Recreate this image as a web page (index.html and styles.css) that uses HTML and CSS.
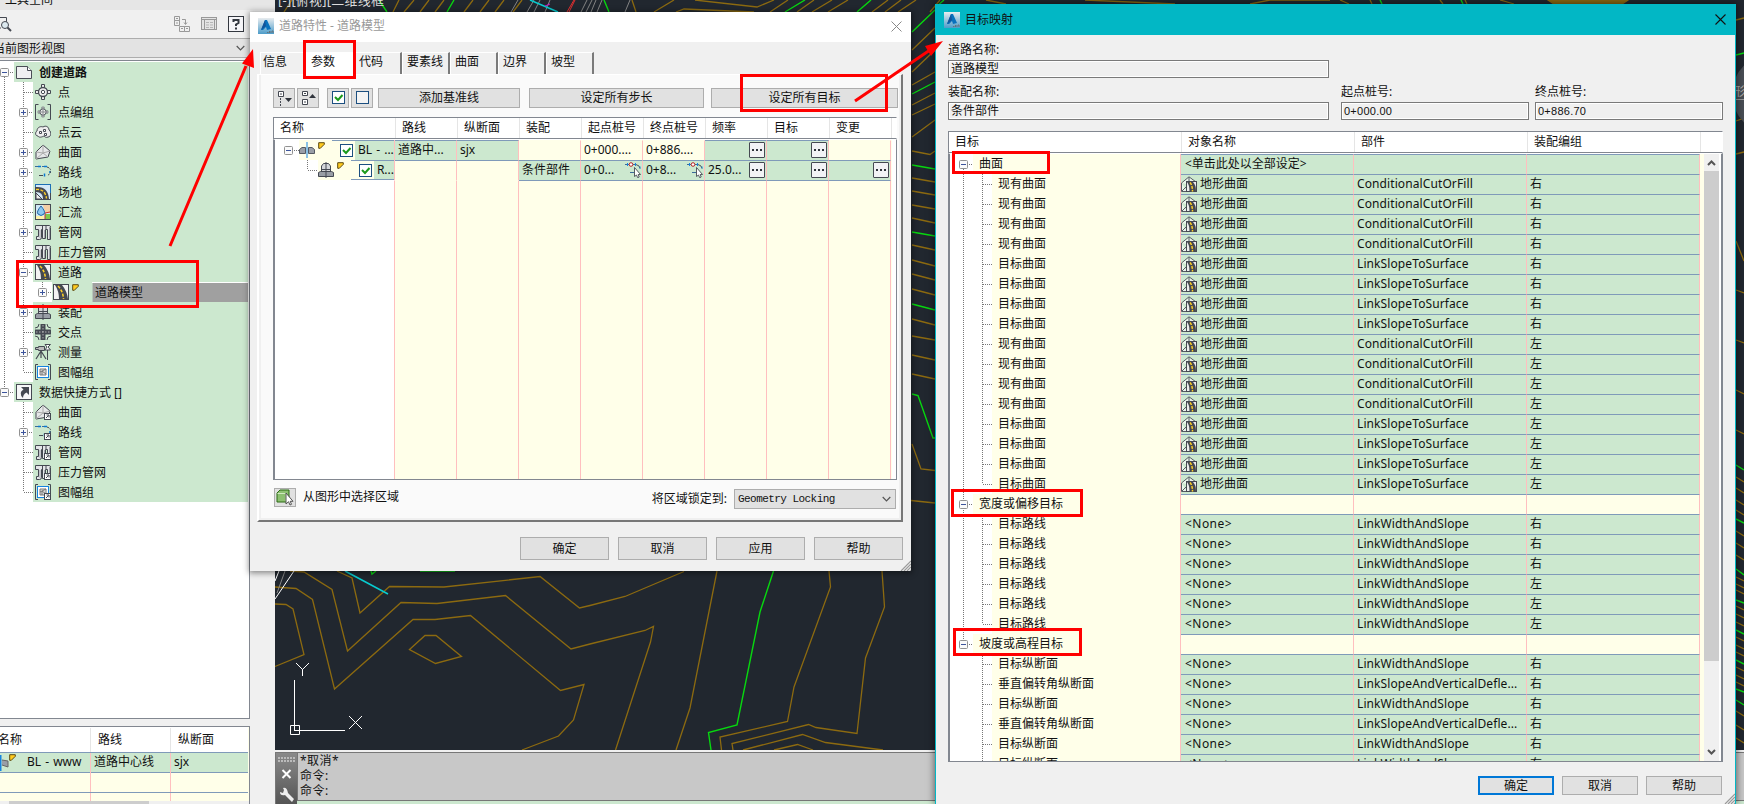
FILE: index.html
```html
<!DOCTYPE html>
<html lang="zh-CN">
<head>
<meta charset="utf-8">
<title>道路特性</title>
<link rel="stylesheet" href="styles.css">
</head>
<body>
<svg class="defs" width="0" height="0">
<defs>
<linearGradient id="sky" x1="0" y1="0" x2="0" y2="1"><stop offset="0" stop-color="#e8ecef"/><stop offset="1" stop-color="#4d9cc9"/></linearGradient>
<symbol id="plus" viewBox="0 0 9 9"><rect x=".5" y=".5" width="8" height="8" rx="1" fill="#fafafa" stroke="#919191"/><path d="M2 4.500h5M4.500 2v5" stroke="#3c549c"/></symbol>
<symbol id="minus" viewBox="0 0 9 9"><rect x=".5" y=".5" width="8" height="8" rx="1" fill="#fafafa" stroke="#919191"/><path d="M2 4.500h5" stroke="#3c549c"/></symbol>
<symbol id="g-root" viewBox="0 0 14 20"><path d="M10 10.500h4" stroke="#777" stroke-dasharray="1 1"/><path d="M4.500 15v5" stroke="#777" stroke-dasharray="1 1"/><use href="#minus" x="0" y="6" width="9" height="9"/></symbol>
<symbol id="g-root2" viewBox="0 0 14 20"><path d="M10 10.500h4" stroke="#777" stroke-dasharray="1 1"/><path d="M4.500 0v5" stroke="#777" stroke-dasharray="1 1"/><use href="#minus" x="0" y="6" width="9" height="9"/></symbol>
<symbol id="g-leaf" viewBox="0 0 29 20"><path d="M19.500 0v20M20 10.500h9" stroke="#777" stroke-dasharray="1 1"/></symbol>
<symbol id="g-last" viewBox="0 0 29 20"><path d="M19.500 0v10M20 10.500h9" stroke="#777" stroke-dasharray="1 1"/></symbol>
<symbol id="g-plus" viewBox="0 0 29 20"><path d="M19.500 0v20M25 10.500h4" stroke="#777" stroke-dasharray="1 1"/><use href="#plus" x="15" y="6" width="9" height="9"/></symbol>
<symbol id="g-minus" viewBox="0 0 29 20"><path d="M19.500 0v20M25 10.500h4" stroke="#777" stroke-dasharray="1 1"/><use href="#minus" x="15" y="6" width="9" height="9"/></symbol>
<symbol id="app" viewBox="0 0 16 16"><rect width="16" height="16" fill="url(#sky)"/><path d="M3 12 7 2h2l4 9-4 1-1-3-3 3z" fill="#0871bd"/><path d="M7 2 3 12l5-4z" fill="#14549a"/><path d="M9 14.500h1.500M11.500 13v2M13 13v2M14 13h1v2" stroke="#666" stroke-width=".8" fill="none"/></symbol>
<symbol id="flag" viewBox="0 0 7 7"><path d="M.7.7h5.600v1.600L2.300 6.300H.7z" fill="#ffcb1f" stroke="#5c4a12"/></symbol>
<symbol id="i-doc" viewBox="0 0 16 16"><path d="M.5 2.500h11l4 4v8H.5z" fill="#f0f0f2" stroke="#4a4e57"/><path d="M11.500 2.500v4h4" fill="#fff" stroke="#4a4e57"/></symbol>
<symbol id="i-point" viewBox="0 0 16 16"><path d="M6.500 4V.5h3V4M6.500 12v3.500h3V12M4 6.500H.5v3H4M12 6.500h3.500v3H12" fill="#eee" stroke="#454952"/><circle cx="8" cy="8" r="4.500" fill="#eee" stroke="#454952" stroke-width="1.300"/><circle cx="8" cy="8" r="1.700" fill="#fff" stroke="#454952"/></symbol>
<symbol id="i-pgroup" viewBox="0 0 16 16"><path d="M3.500.5h-3v15h3M12.500.5h3v15h-3" fill="none" stroke="#454952"/><use href="#i-point" x="2.500" y="2.500" width="11" height="11"/></symbol>
<symbol id="i-cloud" viewBox="0 0 16 16"><path d="M3 12C0 12 0 8 2 7c0-4 4-5 6-4 3-2 6 0 6 3 3 2 2 7-1 7-2 1-3 0-4-1-2 1-5 2-6 0z" fill="#eee" stroke="#454952"/><path d="M4.500 7.500h2v2h-2zM8.500 5.500h2v2h-2zM9.500 9.500h2v2h-2z" fill="#fff" stroke="#454952"/></symbol>
<symbol id="i-surf" viewBox="0 0 16 16"><path d="M8 1 15 7l-2 6-12 2V8z" fill="#e6e8e9" stroke="#454952"/><path d="M8 1v8l5 4M8 9l7-2M8 9l-7-1M8 9l-7 6" stroke="#aaa" fill="none"/></symbol>
<symbol id="i-align" viewBox="0 0 16 16"><path d="M0 2.500h3M7 2.500h2" stroke="#3c6a98"/><path d="M3 2.500h3M9 2.500h3M9.500 9.500v3M14 8h2" stroke="#0879d2" stroke-width="1.500"/><path d="M12 3c5 1 5 7 0 8.500" stroke="#454952" fill="none" stroke-dasharray="2 1"/><path d="M4 11.500h4" stroke="#454952"/></symbol>
<symbol id="i-road" viewBox="0 0 16 16"><rect x=".5" y=".5" width="15" height="15" fill="#f3f3f3" stroke="#454952"/><path d="M2 1h7q5 6 6 14H6Q6 7 2 1z" fill="#454952"/><path d="M5 2q5 5 5.500 13" stroke="#ffd028" stroke-width="1.600" stroke-dasharray="3 1.500" fill="none"/></symbol>
<symbol id="i-site" viewBox="0 0 16 16"><rect x=".5" y=".5" width="15" height="15" fill="#d5e9f8" stroke="#1d6fb5"/><path d="M1 3q12-1 13 12H8Q8 8 1 8z" fill="#454952"/><path d="M1 5.500q9-1 10.500 9" stroke="#ffd028" stroke-width="1.400" stroke-dasharray="3 1.500" fill="none"/><path d="M1 9l6 6H1z" fill="#eee" stroke="#454952"/><path d="M.5 3v12.500h15V9" fill="none" stroke="#454952"/></symbol>
<symbol id="i-catch" viewBox="0 0 16 16"><rect x=".5" y=".5" width="15" height="15" fill="#cfe8f5" stroke="#454952"/><path d="M8 1h7v8h-5z" fill="#f3cfa5"/><path d="M10 10h5v5h-5z" fill="#7fc94b"/><path d="M1 12h8v3H1z" fill="#fff3a8"/><path d="M10 15V9l5-1" stroke="#c33" fill="none"/><path d="M6 2q5 6 3 8-3 3-6 0-2-2 3-8z" fill="#8cc8f0" stroke="#2468a6"/></symbol>
<symbol id="i-pipe" viewBox="0 0 16 16"><path d="M.5 1.500h14q1 0 1 2v12h-3V5.500h-2v9h-3V5.500h-1v8q0 2-2 2h-3v-3h2v-7h-3z" fill="#e4e6e8" stroke="#454952"/><path d="M7.500 2v4M11 2v3" stroke="#454952"/><path d="M5 6v8M9.500 6v8M14.500 3v12" stroke="#a4a8ae"/></symbol>
<symbol id="i-asm" viewBox="0 0 16 16"><path d="M3.500 9.500V4l2-2.500h5l2 2.500v5.500z" fill="#d5d7da" stroke="#454952"/><path d="M.5 14.500v-4l2-1h11l2 1v4z" fill="#999ea6" stroke="#454952"/><path d="M8 0v16M3 7.500h10" stroke="#454952"/></symbol>
<symbol id="i-base" viewBox="0 0 16 16"><path d="M.5 11.500v-4L3 5.500h3.500V11.500zM15.500 11.500v-4L13 5.500H9.500V11.500z" fill="#999ea6" stroke="#555a63"/><path d="M8 0v16" stroke="#1583e0"/></symbol>
<symbol id="i-cross" viewBox="0 0 16 16"><path d="M8 0v16M0 8h16" stroke="#454952" stroke-width="5"/><path d="M8 1v14M1 8h14" stroke="#ccc" stroke-dasharray="1.500 1.500" stroke-width=".8"/><path d="M4 0q0 4-4 4M12 0q0 4 4 4M4 16q0-4-4-4M12 16q0-4 4-4" fill="none" stroke="#454952"/></symbol>
<symbol id="i-survey" viewBox="0 0 16 16"><path d="M.5 3.500h3v-1h6v4h-6v-1h-3z" fill="#bbb" stroke="#454952"/><path d="M6 7 1 15M6 7v7M6 7l5 8" stroke="#454952" stroke-width="1.200"/><path d="M10 .5h5.500L13 3l2.500 3H10l2-3zM12.500 6v10" fill="#fff" stroke="#454952"/></symbol>
<symbol id="i-frame" viewBox="0 0 16 16"><path d="M3 .5H.5v15H3M13 .5h2.500v15H13" fill="none" stroke="#454952"/><rect x="2.500" y="2.500" width="11" height="11" fill="#fff" stroke="#1583e0"/><path d="M5 5h6v6H5zM5 8l6-3M7 11V7l4 3" fill="#ddd" stroke="#777"/></symbol>
<symbol id="i-short" viewBox="0 0 16 16"><rect x=".5" y=".5" width="15" height="15" fill="#f7f7f8" stroke="#454952"/><path d="M5 3h8v8l-2.500-2.500Q7 10 7 14 2 9 7.500 5.500z" fill="#454952"/></symbol>
<symbol id="tag" viewBox="0 0 16 16"><rect x="9.500" y="9.500" width="6" height="6" fill="#fff" stroke="#454952"/><path d="M11 14l2.500-2.500M11.500 11H14v2.500" stroke="#454952" fill="none"/></symbol>
<symbol id="i-surfroad" viewBox="0 0 16 16"><path d="M.5 7 8 .8 15 6v4M.5 7v8.500H6M8 1v5M1 15l6-6" fill="#fff" stroke="#555a63" fill-opacity=".6"/><rect x="5.500" y="5.500" width="10" height="10" fill="#eee" stroke="#454952"/><path d="M6 6h6q3 3 3 9H8.500Q8.500 9 6 6z" fill="#454952"/><path d="M9 6.500q2.500 3 2.500 9" stroke="#ffd028" stroke-width="1.500" stroke-dasharray="3 1" fill="none"/></symbol>
<symbol id="i-dots" viewBox="0 0 16 16"><rect x=".5" y=".5" width="15" height="15" rx=".5" fill="#f2f2f5" stroke="#454952"/><path d="M3 8h2M7 8h2M11 8h2" stroke="#30343c" stroke-width="2"/></symbol>
<symbol id="i-pick" viewBox="0 0 16 16"><path d="M0 2.500h4M8 2.500h3M5 10.500h4" stroke="#3c6a98"/><path d="M11 2.500q4 1 4 4" stroke="#555" fill="none"/><path d="M2.500 1v3M10.500 1v3M15 4.500v2" stroke="#1583e0"/><circle cx="6" cy="2.500" r="1.800" fill="#fff" stroke="#b22"/><path d="M9.500 5.500v9l2-1.500 1.200 2.700 1.500-.7-1-2.500h2.300z" fill="#fff" stroke="#454952" stroke-width=".9"/></symbol>
<symbol id="i-check" viewBox="0 0 13 13"><rect x=".5" y=".5" width="12" height="12" fill="#fff" stroke="#1c4f80"/><path d="M3 6l3 3 4.500-5" fill="none" stroke="#1c9a1c" stroke-width="2"/></symbol>
<symbol id="i-box" viewBox="0 0 13 13"><rect x=".5" y=".5" width="12" height="12" fill="#f4f4f4" stroke="#1c4f80"/></symbol>
<symbol id="chev" viewBox="0 0 9 6"><path d="M.7 1l3.800 3.800L8.300 1" fill="none" stroke="#555" stroke-width="1.200"/></symbol>
<symbol id="grip" viewBox="0 0 11 11"><path d="M1 11 11 1M4 11l7-7M7 11l4-4M10 11l1-1" stroke="#9a9a9a" stroke-width="1.200"/></symbol>
<symbol id="t-leaf" viewBox="0 0 42 20"><path d="M13.500 0v20M32.500 0v20M33 10.500h9" stroke="#777" stroke-dasharray="1 1"/></symbol>
<symbol id="t-last" viewBox="0 0 42 20"><path d="M13.500 0v20M32.500 0v10M33 10.500h9" stroke="#777" stroke-dasharray="1 1"/></symbol>
<symbol id="t-tail" viewBox="0 0 42 20"><path d="M32.500 0v20M33 10.500h9" stroke="#777" stroke-dasharray="1 1"/></symbol>
<symbol id="t-root" viewBox="0 0 23 20"><path d="M13.500 15v5M19 10.500h4" stroke="#777" stroke-dasharray="1 1"/><use href="#minus" x="9" y="6" width="9" height="9"/></symbol>
<symbol id="t-root2" viewBox="0 0 23 20"><path d="M13.500 0v20M19 10.500h4" stroke="#777" stroke-dasharray="1 1"/><use href="#minus" x="9" y="6" width="9" height="9"/></symbol>
<symbol id="t-root3" viewBox="0 0 23 20"><path d="M13.500 0v5M19 10.500h4" stroke="#777" stroke-dasharray="1 1"/><use href="#minus" x="9" y="6" width="9" height="9"/></symbol>
</defs>
</svg>

<svg class="drawing" viewBox="0 0 1744 804" width="1744" height="804">
<rect x="275" width="1469" height="750" fill="#21272f"/>
<g fill="none" stroke="#8c6a10" stroke-width="1.300">
<path d="M337 571l15 7 8 35 29.500-26.500 54.500.5 96-10.500 39.500 31.500 10.500-2.500 35-9 59-25"/>
<path d="M290 571l14 1 28 17.500 15.500 61.500L401 602.500l36 1 68.500-8L571 649l19-5 55-13.500 8.500-4-3 15.500-35 108"/>
<path d="M275 587l21 1.500 16.500 11 22 89.500 78.500-69.500h22l35.500-4 90 75 23.500-6-10.500 35.500-15 16-36.500 14"/>
<path d="M275 604l11 .5 7 4.500 11 45.500-29 12M409.500 649.500l15.500-14h11l25.500 21-26 7z"/>
<path d="M717 571l-27 137-14 42M829 571l1.500 16L794 687l-6.500 34.500L720 737l1.500 13M882 571l2.500 36-19 51-8.500 75.500-41-6-7.500-3-76.500 19 1 6.500M743 750l59.500-15.500 23 8 57.500 7.500M774 750l23.500-5.500L813 750"/>
<path d="M912 50l23-22M912 72l23-22M912 85l23-13M912 105l23-12M912 115l23-11M912 137l23-17M912 151l18 3.500 5-3.500M912 178l23 4M912 191l23 4M912 205l23 4M912 218l23 5M912 245l23 5M912 260l23 6M912 274l23 6M912 289l23 6M912 319l23 6M912 336l23 4M912 355l23 5M912 374l23 5M912 444l9 25 14 1.500M911 500.500l24 2.500"/>
<path d="M284 12l8-12M393 12l6-12M404 12l10-12M420 12l9-12M435 12l9-12M464 12l9-12M480 12l9-12M495 12l9-12M513 12l9-12M636 12l-4-12M654 12l20-12M676 12l8-3 70 3M695 0l62 7 17-7M770 12l18-12M797 12l17-12M812 12l20-12M828 12l20-12M872 12l16-12M885 12l16-12M898 12l18-12M930 12l10-12M1006 4l-20-4M1085 0l90 4M1250 4l20-4h60M1340 0l9 4M1370 0l2 4M1440 0l3 4M1465 0l2 4M1500 0l14 4"/>
<path d="M1736 20l8-2M1736 89l8-2M1736 121l8-3M1736 154l8-2M1736 241l8 20M1736 290l8 3M1736 340l8 3M1736 390l8 4M1736 430l8 4M1736 477l8 5M1736 488l8 5M1736 500l8 5M1736 510l8 5M1736 531l8 5M1736 543l8 5M1736 555l8 5M1736 577l8 4M1736 584l8 4M1736 590l8 4M1736 606l8 4M1736 614l8 4M1736 622l8 4M1736 637l8 4M1736 645l8 4M1736 652l8 4M1736 667l8 4M1736 675l8 4M1736 682l8 4M1736 711l8 5M1736 725l8 5M1736 738l8 5"/>
<path d="M1548 0h80l-6 4h-68z" fill="#8c6a10"/>
</g>
<g fill="none" stroke="#07d80f" stroke-width="1.400">
<path d="M773.500 571 760 612l-23 113-28.500 7.500L711 750M371 571l1 3 4-3M420 571h35M912 32l23-22M912 94l23-12M912 165l23 4M912 232l23 4M912 304l23 6M912 394l6 1.500L933 438h2M387 12l-8-12M447 12l7-12M609 12l-5-12M785 12l20-12M857 12l14-12M935 8l9-8M1380 0l2 4M1461 0l2 4M1736 55l8-2M1736 465l8 5M1736 519l8 4M1736 569l8 6M1736 600l8 3M1736 630l8 4M1736 660l8 4M1736 689l8 3M1736 700l8 5"/>
</g>
<g fill="none" stroke="#fff"><path d="M294 571l-19 28M279 571l-4 10"/><path d="M285 571l-8 22M511 12l7-12M527 12l7-12M534 12l6-12M545 12l5-12M581 12l6-12M586 12l6-12M591 12l5-12M597 12l5-12M625 12l5-12" stroke="#858585"/></g>
<path d="M345 571l43 23M530 0l28 12" stroke="#08ccd0" stroke-width="1.500"/>
<path d="M567 12l7-12M569 12l6-12" stroke="#e03030"/><path d="M545 6l5-2" stroke="#d012d0"/>
<g stroke="#fff" fill="none"><path d="M294.500 680v50M294 730.500h51M290.500 725.500h9v9h-9zM349 716l13 13M362 716l-13 13M296 663l6.500 6.500L309 663M302.500 669v7"/></g>
<text x="278" y="5" fill="#ddd" font-size="13" textLength="106">[-][俯视][二维线框</text>
<circle cx="1772" cy="94" r="40" fill="#494e55"/><path d="M1736 99.500h8" stroke="#999"/><text x="1733" y="96" fill="#aaa" font-size="12">形</text>
</svg>

<aside class="toolspace">
<div class="ts-title">工具空间</div>
<div class="ts-tools">
<svg width="14" height="18" viewBox="0 0 14 18"><path d="M0 2.500h6.500V8M0 13h1" fill="none" stroke="#454952"/><circle cx="5" cy="10" r="3.500" fill="#dce9ef" stroke="#454952"/><path d="M7.500 12.500 11 16" stroke="#454952" stroke-width="2"/></svg>
<span class="grow"></span>
<svg width="16" height="16" viewBox="0 0 16 16"><path d="M.5.500h5v4h-5zM.5 4.500h5v5h-5zM5.500 10.500h5v5h-5zM10.500 10.500h5v5h-5zM2 2.500h2M2 7h2M7 12.500h2M12 12.500h2M8 3.500h3.500V8M10 6.500l1.500 2 1.500-2" fill="none" stroke="#999"/></svg>
<svg width="16" height="14" viewBox="0 0 16 14"><rect x=".5" y=".5" width="15" height="12" fill="#e4e4e4" stroke="#999"/><path d="M1 2.500h14M3.500 3v10M13.500 3v10" stroke="#999"/><path d="M5 5.500h3M9 5.500h3M5 8h3M9 8h3M5 10.500h3M9 10.500h3" stroke="#b5b5b5"/></svg>
<svg width="16" height="16" viewBox="0 0 16 16"><rect x=".5" y=".5" width="15" height="15" fill="#f5f5f8" stroke="#33373f"/><path d="M5.500 6V4h5v3L8 8.500v1.500M8 11.500v2" fill="none" stroke="#33373f" stroke-width="2"/></svg>
</div>
<div class="ts-combo"><span>当前图形视图</span><svg width="9" height="6"><use href="#chev"/></svg></div>
<div class="tree">
<div class="trow root"><svg class="g14"><use href="#g-root"/></svg><div class="fill"><svg class="ic"><use href="#i-doc"/></svg><b>创建道路</b></div></div>
<div class="branch">
<div class="trow"><svg class="g29"><use href="#g-leaf"/></svg><div class="fill"><svg class="ic"><use href="#i-point"/></svg><span>点</span></div></div>
<div class="trow"><svg class="g29"><use href="#g-plus"/></svg><div class="fill"><svg class="ic"><use href="#i-pgroup"/></svg><span>点编组</span></div></div>
<div class="trow"><svg class="g29"><use href="#g-leaf"/></svg><div class="fill"><svg class="ic"><use href="#i-cloud"/></svg><span>点云</span></div></div>
<div class="trow"><svg class="g29"><use href="#g-plus"/></svg><div class="fill"><svg class="ic"><use href="#i-surf"/></svg><span>曲面</span></div></div>
<div class="trow"><svg class="g29"><use href="#g-plus"/></svg><div class="fill"><svg class="ic"><use href="#i-align"/></svg><span>路线</span></div></div>
<div class="trow"><svg class="g29"><use href="#g-leaf"/></svg><div class="fill"><svg class="ic"><use href="#i-site"/></svg><span>场地</span></div></div>
<div class="trow"><svg class="g29"><use href="#g-leaf"/></svg><div class="fill"><svg class="ic"><use href="#i-catch"/></svg><span>汇流</span></div></div>
<div class="trow"><svg class="g29"><use href="#g-plus"/></svg><div class="fill"><svg class="ic"><use href="#i-pipe"/></svg><span>管网</span></div></div>
<div class="trow"><svg class="g29"><use href="#g-leaf"/></svg><div class="fill"><svg class="ic"><use href="#i-pipe"/></svg><span>压力管网</span></div></div>
<div class="trow"><svg class="g29"><use href="#g-minus"/></svg><div class="fill"><svg class="ic"><use href="#i-road"/></svg><span>道路</span></div></div>
<div class="trow"><svg class="g48" viewBox="0 0 48 20"><path d="M19.500 0v20M38.500 0v5M44 10.500h4" stroke="#777" stroke-dasharray="1 1"/><use href="#plus" x="34" y="6" width="9" height="9"/></svg><div class="model"><svg class="ic"><use href="#i-road"/></svg><svg class="fl"><use href="#flag"/></svg></div><div class="picked">道路模型</div></div>
<div class="trow"><svg class="g29"><use href="#g-plus"/></svg><div class="fill"><svg class="ic"><use href="#i-asm"/></svg><span>装配</span></div></div>
<div class="trow"><svg class="g29"><use href="#g-leaf"/></svg><div class="fill"><svg class="ic"><use href="#i-cross"/></svg><span>交点</span></div></div>
<div class="trow"><svg class="g29"><use href="#g-plus"/></svg><div class="fill"><svg class="ic"><use href="#i-survey"/></svg><span>测量</span></div></div>
<div class="trow"><svg class="g29"><use href="#g-last"/></svg><div class="fill"><svg class="ic"><use href="#i-frame"/></svg><span>图幅组</span></div></div>
</div>
<div class="trow root"><svg class="g14"><use href="#g-root2"/></svg><div class="fill"><svg class="ic"><use href="#i-short"/></svg><span>数据快捷方式 []</span></div></div>
<div class="branch end">
<div class="trow"><svg class="g29"><use href="#g-leaf"/></svg><div class="fill"><svg class="ic"><use href="#i-surf"/><use href="#tag"/></svg><span>曲面</span></div></div>
<div class="trow"><svg class="g29"><use href="#g-plus"/></svg><div class="fill"><svg class="ic"><use href="#i-align"/><use href="#tag"/></svg><span>路线</span></div></div>
<div class="trow"><svg class="g29"><use href="#g-leaf"/></svg><div class="fill"><svg class="ic"><use href="#i-pipe"/><use href="#tag"/></svg><span>管网</span></div></div>
<div class="trow"><svg class="g29"><use href="#g-leaf"/></svg><div class="fill"><svg class="ic"><use href="#i-pipe"/><use href="#tag"/></svg><span>压力管网</span></div></div>
<div class="trow"><svg class="g29"><use href="#g-last"/></svg><div class="fill"><svg class="ic"><use href="#i-frame"/><use href="#tag"/></svg><span>图幅组</span></div></div>
</div>
</div>
<div class="mini">
<div class="mini-row head"><span class="clipped">名称</span><span>路线</span><span>纵断面</span></div>
<div class="mini-row green"><span><svg width="27" height="20" viewBox="0 0 27 20"><path d="M.5 2v16" stroke="#1583e0" stroke-width="2"/><path d="M2 7l6 1v6l-6-2" fill="#999ea6" stroke="#666"/><use href="#flag" x="9" y="1" width="7" height="7"/></svg>BL - www</span><span>道路中心线</span><span>sjx</span></div>
<div class="mini-row"><span></span><span></span><span></span></div>
<div class="mini-row"><span></span><span></span><span></span></div>
<div class="mini-scroll"><i></i></div>
</div>
</aside>

<section class="command">
<div class="cmd-side"><svg width="22" height="52" viewBox="0 0 22 52"><path d="M2 5h18M2 8h18" stroke="#bbb" stroke-width="2" stroke-dasharray="2 1"/><path d="M6.500 17l8 8M14.500 17l-8 8" stroke="#fff" stroke-width="2"/><path d="M4 39l3 1 1-3-1-2q4-1 5 5l6 6-2 3-7-7q-5 1-5-3z" fill="#eee"/></svg></div>
<div class="cmd-main"><p>*取消*</p><p>命令:</p><p>命令:</p><div class="cmd-input"></div></div>
</section>

<section class="dialog props">
<header><svg class="ic"><use href="#app"/></svg><span>道路特性 - 道路模型</span><svg width="11" height="11" viewBox="0 0 11 11"><path d="M.5.500l10 10M10.500.500l-10 10" stroke="#888"/></svg></header>
<nav class="tabs"><span>信息</span><span class="on">参数</span><span>代码</span><span>要素线</span><span>曲面</span><span>边界</span><span>坡型</span></nav>
<div class="pane">
<div class="bar">
<button class="sq"><svg width="16" height="16" viewBox="0 0 16 16"><path d="M2.500 1.500h5v5h-5z" fill="#fff" stroke="#454952"/><path d="M4 4h2M4.500 8v8" stroke="#454952" stroke-dasharray="2 1"/><path d="M9 8h7l-3.500 4z" fill="#30343c"/></svg></button>
<button class="sq"><svg width="16" height="16" viewBox="0 0 16 16"><path d="M2.500 1.500h5v4h-5zM2.500 9.500h5v5h-5z" fill="#fff" stroke="#454952"/><path d="M4 3.500h2M4 12h2" stroke="#454952"/><path d="M9 8h7l-3.500-4z" fill="#30343c"/></svg></button>
<button class="sq gap8"><svg width="13" height="13"><use href="#i-check"/></svg></button>
<button class="sq"><svg width="13" height="13"><use href="#i-box"/></svg></button>
<button class="b1">添加基准线</button><button class="b2">设定所有步长</button><button class="b3">设定所有目标</button>
</div>
<div class="grid">
<div class="ghead"><span>名称</span><span>路线</span><span>纵断面</span><span>装配</span><span>起点桩号</span><span>终点桩号</span><span>频率</span><span>目标</span><span>变更</span></div>
<div class="gbody">
<div class="grow1">
<div class="c name"><svg class="n1" viewBox="0 0 24 20"><path d="M19 10.500h5" stroke="#777" stroke-dasharray="1 1"/><use href="#minus" x="9" y="6" width="9" height="9"/></svg><div class="nicon"><svg class="ic"><use href="#i-base"/></svg><svg class="fl"><use href="#flag"/></svg></div><div class="ck line"><svg width="13" height="13"><use href="#i-check"/></svg></div><div class="nt line">BL - ...</div></div>
<div class="c g t">道路中...</div><div class="c g t">sjx</div><div class="c"></div><div class="c">0+000....</div><div class="c">0+886....</div><div class="c g t"><svg class="ic end-ic"><use href="#i-dots"/></svg></div><div class="c g t"><svg class="ic end-ic"><use href="#i-dots"/></svg></div><div class="c"></div>
</div>
<div class="grow1 second">
<div class="c name"><svg class="n2" viewBox="0 0 43 20"><path d="M32.500 0v10M33 10.500h10" stroke="#777" stroke-dasharray="1 1"/></svg><div class="nicon"><svg class="ic"><use href="#i-asm"/></svg><svg class="fl"><use href="#flag"/></svg></div><div class="ck line"><svg width="13" height="13"><use href="#i-check"/></svg></div><div class="nt line">R...</div></div>
<div class="c t"></div><div class="c t"></div><div class="c g t">条件部件</div><div class="c g t">0+0...<svg class="ic end-ic"><use href="#i-pick"/></svg></div><div class="c g t">0+8...<svg class="ic end-ic"><use href="#i-pick"/></svg></div><div class="c g t">25.0...<svg class="ic end-ic"><use href="#i-dots"/></svg></div><div class="c g t"><svg class="ic end-ic"><use href="#i-dots"/></svg></div><div class="c g t"><svg class="ic end-ic"><use href="#i-dots"/></svg></div>
</div>
<div class="grow1 rest"><div class="c blank"></div><div class="c"></div><div class="c"></div><div class="c t"></div><div class="c t"></div><div class="c t"></div><div class="c t"></div><div class="c t"></div><div class="c t"></div></div>
</div>
</div>
<div class="pfoot">
<button class="sq"><svg width="18" height="17" viewBox="0 0 18 17"><path d="M1 4l3-3h9v9l-3 3H1z" fill="#8dc071" stroke="#2b6a14"/><path d="M1.500 4.500h8.500v8" fill="none" stroke="#d0e9c0"/><path d="M10 4v11l2.500-2.300L14 16l1.500-.7-1.300-3H17z" fill="#fff" stroke="#444" stroke-width=".9"/></svg></button>
<span class="st">从图形中选择区域</span><span class="grow"></span><span class="st lock">将区域锁定到:</span>
<div class="combo"><span>Geometry Locking</span><svg width="9" height="6"><use href="#chev"/></svg></div>
</div>
</div>
<footer><button>确定</button><button>取消</button><button>应用</button><button>帮助</button></footer>
<svg class="corner" width="11" height="11"><use href="#grip"/></svg>
</section>

<section class="dialog target">
<header><svg class="ic"><use href="#app"/></svg><span>目标映射</span><svg width="11" height="11" viewBox="0 0 11 11"><path d="M.5.500l10 10M10.500.500l-10 10" stroke="#111" stroke-width="1.100"/></svg></header>
<div class="form">
<label class="w1">道路名称:<span class="in">道路模型</span></label>
<div class="frow"><label class="w1">装配名称:<span class="in">条件部件</span></label><label class="w2">起点桩号:<span class="in num">0+000.00</span></label><label class="w3">终点桩号:<span class="in num">0+886.70</span></label></div>
</div>
<div class="map">
<div class="mhead"><span>目标</span><span>对象名称</span><span>部件</span><span>装配编组</span><span></span></div>
<div class="mbody">
<div class="rows">
<div class="r top"><div class="k"><svg class="k1"><use href="#t-root"/></svg><span>曲面</span></div><div>&lt;单击此处以全部设定&gt;</div><div></div><div></div></div>
<div class="r"><div class="k"><svg class="k2"><use href="#t-leaf"/></svg><span>现有曲面</span></div><div class="s"><svg class="ic"><use href="#i-surfroad"/></svg>地形曲面</div><div>ConditionalCutOrFill</div><div>右</div></div>
<div class="r"><div class="k"><svg class="k2"><use href="#t-leaf"/></svg><span>现有曲面</span></div><div class="s"><svg class="ic"><use href="#i-surfroad"/></svg>地形曲面</div><div>ConditionalCutOrFill</div><div>右</div></div>
<div class="r"><div class="k"><svg class="k2"><use href="#t-leaf"/></svg><span>现有曲面</span></div><div class="s"><svg class="ic"><use href="#i-surfroad"/></svg>地形曲面</div><div>ConditionalCutOrFill</div><div>右</div></div>
<div class="r"><div class="k"><svg class="k2"><use href="#t-leaf"/></svg><span>现有曲面</span></div><div class="s"><svg class="ic"><use href="#i-surfroad"/></svg>地形曲面</div><div>ConditionalCutOrFill</div><div>右</div></div>
<div class="r"><div class="k"><svg class="k2"><use href="#t-leaf"/></svg><span>目标曲面</span></div><div class="s"><svg class="ic"><use href="#i-surfroad"/></svg>地形曲面</div><div>LinkSlopeToSurface</div><div>右</div></div>
<div class="r"><div class="k"><svg class="k2"><use href="#t-leaf"/></svg><span>目标曲面</span></div><div class="s"><svg class="ic"><use href="#i-surfroad"/></svg>地形曲面</div><div>LinkSlopeToSurface</div><div>右</div></div>
<div class="r"><div class="k"><svg class="k2"><use href="#t-leaf"/></svg><span>目标曲面</span></div><div class="s"><svg class="ic"><use href="#i-surfroad"/></svg>地形曲面</div><div>LinkSlopeToSurface</div><div>右</div></div>
<div class="r"><div class="k"><svg class="k2"><use href="#t-leaf"/></svg><span>目标曲面</span></div><div class="s"><svg class="ic"><use href="#i-surfroad"/></svg>地形曲面</div><div>LinkSlopeToSurface</div><div>右</div></div>
<div class="r"><div class="k"><svg class="k2"><use href="#t-leaf"/></svg><span>现有曲面</span></div><div class="s"><svg class="ic"><use href="#i-surfroad"/></svg>地形曲面</div><div>ConditionalCutOrFill</div><div>左</div></div>
<div class="r"><div class="k"><svg class="k2"><use href="#t-leaf"/></svg><span>现有曲面</span></div><div class="s"><svg class="ic"><use href="#i-surfroad"/></svg>地形曲面</div><div>ConditionalCutOrFill</div><div>左</div></div>
<div class="r"><div class="k"><svg class="k2"><use href="#t-leaf"/></svg><span>现有曲面</span></div><div class="s"><svg class="ic"><use href="#i-surfroad"/></svg>地形曲面</div><div>ConditionalCutOrFill</div><div>左</div></div>
<div class="r"><div class="k"><svg class="k2"><use href="#t-leaf"/></svg><span>现有曲面</span></div><div class="s"><svg class="ic"><use href="#i-surfroad"/></svg>地形曲面</div><div>ConditionalCutOrFill</div><div>左</div></div>
<div class="r"><div class="k"><svg class="k2"><use href="#t-leaf"/></svg><span>目标曲面</span></div><div class="s"><svg class="ic"><use href="#i-surfroad"/></svg>地形曲面</div><div>LinkSlopeToSurface</div><div>左</div></div>
<div class="r"><div class="k"><svg class="k2"><use href="#t-leaf"/></svg><span>目标曲面</span></div><div class="s"><svg class="ic"><use href="#i-surfroad"/></svg>地形曲面</div><div>LinkSlopeToSurface</div><div>左</div></div>
<div class="r"><div class="k"><svg class="k2"><use href="#t-leaf"/></svg><span>目标曲面</span></div><div class="s"><svg class="ic"><use href="#i-surfroad"/></svg>地形曲面</div><div>LinkSlopeToSurface</div><div>左</div></div>
<div class="r"><div class="k"><svg class="k2"><use href="#t-last"/></svg><span>目标曲面</span></div><div class="s"><svg class="ic"><use href="#i-surfroad"/></svg>地形曲面</div><div>LinkSlopeToSurface</div><div>左</div></div>
<div class="r cat"><div class="k"><svg class="k1"><use href="#t-root2"/></svg><span>宽度或偏移目标</span></div><div></div><div></div><div></div></div>
<div class="r"><div class="k"><svg class="k2"><use href="#t-leaf"/></svg><span>目标路线</span></div><div>&lt;None&gt;</div><div>LinkWidthAndSlope</div><div>右</div></div>
<div class="r"><div class="k"><svg class="k2"><use href="#t-leaf"/></svg><span>目标路线</span></div><div>&lt;None&gt;</div><div>LinkWidthAndSlope</div><div>右</div></div>
<div class="r"><div class="k"><svg class="k2"><use href="#t-leaf"/></svg><span>目标路线</span></div><div>&lt;None&gt;</div><div>LinkWidthAndSlope</div><div>右</div></div>
<div class="r"><div class="k"><svg class="k2"><use href="#t-leaf"/></svg><span>目标路线</span></div><div>&lt;None&gt;</div><div>LinkWidthAndSlope</div><div>左</div></div>
<div class="r"><div class="k"><svg class="k2"><use href="#t-leaf"/></svg><span>目标路线</span></div><div>&lt;None&gt;</div><div>LinkWidthAndSlope</div><div>左</div></div>
<div class="r"><div class="k"><svg class="k2"><use href="#t-last"/></svg><span>目标路线</span></div><div>&lt;None&gt;</div><div>LinkWidthAndSlope</div><div>左</div></div>
<div class="r cat"><div class="k"><svg class="k1"><use href="#t-root3"/></svg><span>坡度或高程目标</span></div><div></div><div></div><div></div></div>
<div class="r"><div class="k"><svg class="k2"><use href="#t-tail"/></svg><span>目标纵断面</span></div><div>&lt;None&gt;</div><div>LinkWidthAndSlope</div><div>右</div></div>
<div class="r"><div class="k"><svg class="k2"><use href="#t-tail"/></svg><span>垂直偏转角纵断面</span></div><div>&lt;None&gt;</div><div>LinkSlopeAndVerticalDefle...</div><div>右</div></div>
<div class="r"><div class="k"><svg class="k2"><use href="#t-tail"/></svg><span>目标纵断面</span></div><div>&lt;None&gt;</div><div>LinkWidthAndSlope</div><div>右</div></div>
<div class="r"><div class="k"><svg class="k2"><use href="#t-tail"/></svg><span>垂直偏转角纵断面</span></div><div>&lt;None&gt;</div><div>LinkSlopeAndVerticalDefle...</div><div>右</div></div>
<div class="r"><div class="k"><svg class="k2"><use href="#t-tail"/></svg><span>目标纵断面</span></div><div>&lt;None&gt;</div><div>LinkWidthAndSlope</div><div>右</div></div>
<div class="r"><div class="k"><svg class="k2"><use href="#t-tail"/></svg><span>目标纵断面</span></div><div>&lt;None&gt;</div><div>LinkWidthAndSlope</div><div>右</div></div>
</div>
<div class="sb"><svg width="15" height="17" viewBox="0 0 15 17"><path d="M4 11l3.500-3.500L11 11" fill="none" stroke="#555" stroke-width="2"/></svg><i></i><svg width="15" height="17" viewBox="0 0 15 17"><path d="M4 6l3.500 3.500L11 6" fill="none" stroke="#555" stroke-width="2"/></svg></div>
</div>
</div>
<footer><button class="def">确定</button><button>取消</button><button>帮助</button></footer>
<svg class="corner" width="11" height="11"><use href="#grip"/></svg>
</section>

<svg class="marks" viewBox="0 0 1744 804" width="1744" height="804">
<g fill="none" stroke="#f00" stroke-width="3"><path d="M17.500 261.500h180v45h-180zM304.500 41.500h50v36h-50zM741.500 75.500h145v35h-145zM953.500 152.500h95v20h-95zM952.500 490.500h129v25h-129zM954.500 629.500h126v25h-126z"/><path d="M170 246 246 66M855 101l75-51"/></g>
<path d="M253 49l1 19-12-4.500zM943 41l-12 15-6-10z" fill="#f00"/>
</svg>
</body>
</html>
```
FILE: styles.css
```css
* { box-sizing: border-box; }
body {
  margin: 0; width: 1744px; height: 804px; overflow: hidden; position: relative;
  background: #f0f0f0; color: #111; font: 12px/20px "Noto Sans", "Noto Sans CJK SC", sans-serif;
}
svg { flex: none; display: block; }
.defs, .drawing, .marks { position: absolute; left: 0; top: 0; }
.marks { pointer-events: none; }
.ic { width: 16px; height: 16px; }
.fl { width: 7px; height: 7px; }
.grow { flex: 1; }
button { font: inherit; color: #111; margin: 0; padding: 0; background: #e1e1e1; border: 1px solid #adadad; display: flex; flex: none; align-items: center; justify-content: center; }

/* tool space */
.toolspace { position: absolute; left: 0; top: 0; width: 275px; height: 804px; padding-right: 25px; display: flex; flex-direction: column; background: #f0f0f0; }
.ts-title { height: 10px; padding-left: 5px; line-height: 20px; margin-right: -25px; background: #e6e6e6; display: flex; align-items: flex-end; }
.ts-tools { height: 28px; display: flex; align-items: center; gap: 11px; padding-right: 6px; }
.ts-combo { height: 20px; display: flex; align-items: center; justify-content: space-between; padding-right: 5px; background: #e3e3e3; border-top: 1px solid #adadad; border-bottom: 1px solid #adadad; }
.ts-combo span { margin-left: -7px; padding-top: 1px; }
.tree { margin-top: 2px; height: 659px; border: 1px solid #828790; border-left: 0; padding-top: 1px; background: #fff; }
.trow { display: flex; height: 20px; }
.trow .fill { flex: 1; display: flex; align-items: center; background: #cce8cf; padding-left: 2px; gap: 7px; margin-right: 1px; }
.fill span, .fill b { padding-top: 1px; line-height: 19px; }
.branch { padding-left: 4px; background: repeating-linear-gradient(#fff 0 1px, #777 1px 2px) 4px 0 / 1px 100% no-repeat; }
.branch.end { background: none; }
.g14 { width: 14px; height: 20px; }
.g29 { width: 29px; height: 20px; }
.g48 { width: 48px; height: 20px; }
.model { display: flex; width: 40px; padding: 2px 0 0 1px; gap: 3px; background: #cce8cf; }
.picked { flex: 1; background: #a0a0a0; border-left: 1px solid #b8c8ba; margin: 1px 1px 0 0; padding-left: 2px; line-height: 19px; }
.mini { margin-top: 7px; height: 78px; background: #ffffe9; border-top: 1px solid #828790; border-right: 1px solid #828790; display: flex; flex-direction: column; overflow: hidden; }
.mini-row { display: grid; grid-template-columns: 91px 80px 77px; height: 20px; flex: none; border-bottom: 1px solid #7f9ab9; margin-right: 1px; }
.mini-row span { border-right: 1px solid #ffbfbf; padding-left: 3px; display: flex; line-height: 17px; word-spacing: 1px; }
.mini-row span:first-child { padding-left: 0; }
.mini-row span:last-child { border: 0; }
.mini-row.head { height: 26px; background: #fff; padding-top: 1px; }
.mini-row.head span { border-color: #e5e5e5; padding-left: 7px; line-height: 24px; }
.mini-row.head .clipped { margin-left: -9px; }
.mini-row.green { background: #cce8cf; }
.mini-row:nth-child(4) { height: 8px; border: 0; }
.mini-scroll { height: 4px; background: #f0f0f0; }
.mini-scroll i { display: block; width: 140px; height: 4px; margin-left: 9px; background: #cdcdcd; }

/* command line */
.command { position: absolute; left: 275px; top: 750px; width: 1469px; height: 54px; display: flex; padding-top: 2px; background: #f0f0f0; }
.cmd-side { width: 23px; border: 1px solid #777; border-bottom: 0; background: linear-gradient(#8a8a8a, #555); overflow: hidden; }
.cmd-main { flex: 1; background: #c8c8c8; border-top: 1px solid #777; padding-left: 2px; }
.cmd-main p { margin: 0; height: 15px; line-height: 15px; letter-spacing: .5px; }
.cmd-input { height: 10px; margin: 2px 0 0 -3px; border-top: 1px solid #777; background: #cce8cf; }

/* dialogs */
.dialog { position: absolute; display: flex; flex-direction: column; background: #f0f0f0; }
.dialog header { display: flex; align-items: center; gap: 5px; }
.dialog header span { flex: 1; }
.corner { position: absolute; right: 0; bottom: 0; }
.props { left: 250px; top: 12px; width: 661px; height: 559px; box-shadow: 0 1px 6px 1px rgba(0, 0, 0, .45); }
.props header { height: 30px; padding: 0 9px 2px 8px; background: #fff; color: #999; }
.tabs { display: flex; height: 22px; margin: 10px 0 0 10px; }
.tabs span { width: 48px; padding-left: 5px; border-left: 1px solid #fff; border-right: 2px solid #7a7a7a; border-top: 1px solid #fff; line-height: 18px; }
.tabs span:nth-child(1) { width: 46px; padding-left: 2px; border-right: 0; }
.tabs span:nth-child(2) { padding-left: 4px; }
.tabs span:nth-child(3) { padding-left: 4px; }
.tabs span:nth-child(n+4) { padding-left: 4px; }
.tabs .on { background: #fff; border-color: #fff; }
.pane { width: 646px; height: 448px; margin-left: 7px; border: 1px solid #fff; border-left-width: 2px; border-right: 2px solid #777; border-bottom: 2px solid #777; padding: 0 2px 2px; background: #f0f0f0; display: flex; flex-direction: column; }
.pane > div { background: #fafafa; }
.bar { display: flex; padding: 13px 0 10px 12px; gap: 2px; height: 42px; }
.bar button { height: 20px; padding-bottom: 1px; }
.sq { width: 22px; height: 20px; }
.bar .gap8 { margin-left: 6px; }
.b1 { width: 142px; margin-left: 3px; }
.b2 { width: 175px; margin-left: 7px; }
.b3 { width: 187px; margin-left: 5px; }
.grid { width: 638px; height: 363px; padding: 0 2px 0 12px; display: flex; flex-direction: column; }
.ghead { display: grid; grid-template-columns: 122px repeat(8, 62px) 1fr; height: 22px; border: 1px solid #828790; border-right-color: #fff; background: #fff; }
.ghead span { padding-left: 6px; border-right: 1px solid #e5e5e5; }
.gbody { flex: 1; border: 2px solid #828790; border-top: 1px solid #fff; border-right-width: 1px; border-bottom-width: 1px; background: #fff; display: flex; flex-direction: column; }
.grow1 { display: grid; grid-template-columns: 120px repeat(8, 62px); height: 20px; margin-right: 4px; background: #ffffe9; }
.c { border-right: 1px solid #ffbfbf; padding-left: 3px; line-height: 17px; display: flex; white-space: nowrap; overflow: hidden; border-top: 1px solid transparent; }
.c.g { background: #cce8cf; }
.grow1 .c.g.t, .rest .c.t { border-top-color: #7f9ab9; }
.second .c:nth-child(2), .second .c:nth-child(3) { border-top-color: #7f9ab9; }
.end-ic { margin: 1px 1px 0 auto; }
.rest { flex: 1; }
.c.blank { background: #fff; }
.c.name { padding: 0; background: #fff; border-top: 0; }
.n1 { width: 24px; height: 20px; }
.n2 { width: 43px; height: 20px; }
.nicon { display: flex; width: 33px; gap: 3px; padding: 2px 0 0; background: #ffffe9; }
.ck { background: #ffffe9; padding: 3px 2px 0 8px; width: 23px; }
.nt { flex: 1; background: #cce8cf; padding-left: 3px; word-spacing: 1px; }
.line { border-top: 1px solid #7f9ab9; }
.second .line { border-bottom: 1px solid #7f9ab9; height: 20px; }
.pfoot { flex: 1; display: flex; align-items: flex-start; padding: 8px 3px 0 13px; }
.pfoot .sq { height: 19px; }
.st { padding-left: 7px; line-height: 18px; }
.lock { line-height: 21px; padding-right: 7px; }
.combo { width: 162px; height: 20px; margin-top: 1px; padding: 0 4px 0 3px; display: flex; align-items: center; justify-content: space-between; border: 1px solid #adadad; background: #e1e1e1; font: 11px "Liberation Mono", monospace; letter-spacing: -.55px; }
.props footer { display: flex; gap: 9px; margin: 15px 8px 0 auto; }
.props footer button { width: 89px; height: 23px; }

.target { left: 935px; top: 4px; width: 801px; height: 800px; border: 1px solid #02b7c5; border-bottom: 0; box-shadow: 0 0 7px 1px rgba(0, 0, 0, .5); }
.target header { height: 30px; padding: 0 9px 1px 8px; background: #02b7c5; }
.form { padding: 5px 0 0 12px; }
.form label { display: block; }
.w1 { width: 381px; }
.w2, .w3 { width: 188px; }
.in { display: block; height: 18px; border: 1px solid #7a7a7a; padding-left: 2px; line-height: 15px; box-shadow: inset 0 0 0 1px #fff; }
.form > label { height: 42px; }
.frow { display: flex; height: 42px; }
.w2 { margin-left: 12px; }
.w3 { margin-left: 6px; }
.num { font-family: "Liberation Sans", sans-serif; font-size: 11px; letter-spacing: .25px; line-height: 16px; }
.map { width: 775px; height: 631px; margin: 7px 0 0 12px; display: flex; flex-direction: column; }
.mhead { display: grid; grid-template-columns: 233px 173px 173px 173px 1fr; height: 22px; background: #fff; border: 1px solid #828790; border-right-color: #fff; }
.mhead span { padding-left: 6px; border-right: 1px solid #e5e5e5; }
.mhead span:last-child { border: 0; }
.mbody { height: 609px; display: flex; justify-content: space-between; background: #fff; border: 2px solid #828790; border-top: 1px solid #fff; border-bottom-width: 1px; overflow: hidden; }
.rows { width: 754px; background: #ffffe9; overflow: hidden; }
.r { display: grid; grid-template-columns: 231px 173px 173px 173px; height: 20px; }
.r > div { display: flex; border-right: 1px solid #ffbfbf; border-top: 1px solid #7f9ab9; background: #cce8cf; padding-left: 3px; line-height: 18px; white-space: nowrap; overflow: hidden; }
.r > div:nth-child(2) { padding-left: 4px; }
.r > div:nth-child(3) { letter-spacing: .1px; }
.r:not(.top) > div:nth-child(2):not(.s) { letter-spacing: .45px; }
.r > .k { border-top: 0; background: #ffffe9; padding: 0; line-height: 19px; }
.r > div.s { padding-left: 0; gap: 3px; }
.s .ic { margin-top: 1px; }
.cat > div { background: #ffffe9; }
.k1 { width: 23px; height: 20px; background: #fff; }
.k2 { width: 42px; height: 20px; background: #fff; }
.k1 + span, .k2 + span { padding-left: 6px; }
.sb { width: 15px; margin-right: 2px; background: #f0f0f0; display: flex; flex-direction: column; }
.sb i { height: 490px; background: #cdcdcd; margin-bottom: auto; }
.target footer { display: flex; gap: 8px; margin: 14px 13px 0 auto; }
.target footer button { width: 76px; height: 19px; }
.target footer .def { border: 2px solid #0078d7; }
```
